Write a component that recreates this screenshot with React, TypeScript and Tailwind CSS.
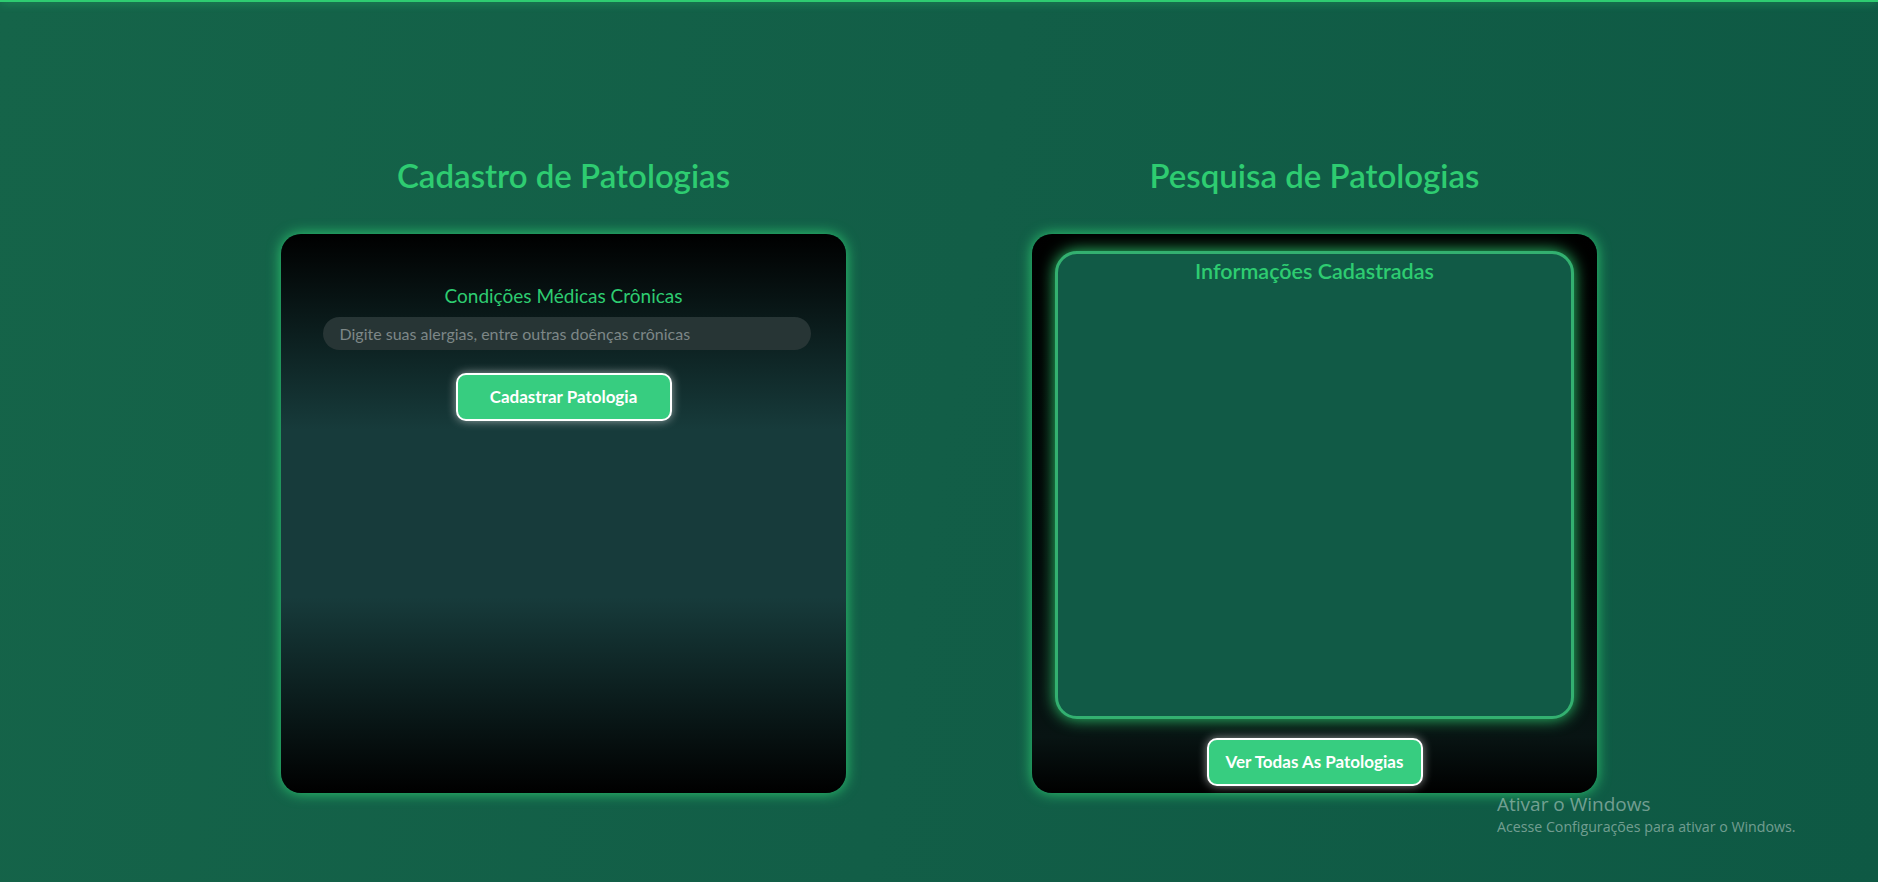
export default function App() {
  return (
    <div className="relative min-h-screen w-full overflow-hidden bg-[linear-gradient(100deg,#156449_0%,#125e47_50%,#0e5944_100%)] font-['Lato',sans-serif]">
      {/* barra superior */}
      <div className="absolute top-0 left-0 right-0 h-[2px] bg-[#2ecc71] shadow-[0_0_10px_#2ecc71]" />

      <div className="flex justify-center gap-[186px] pt-[156px]">
        {/* CADASTRO */}
        <div className="flex flex-col items-center">
          <h1 className="text-[33px] leading-[38px] font-semibold text-[#2ecc71] mb-[40px]">Cadastro de Patologias</h1>
          <div className="w-[565px] h-[559px] rounded-[20px] bg-[linear-gradient(180deg,#000_0%,#173b3b_35%,#173b3b_65%,#000_100%)] shadow-[0_0_14px_#2ecc71] flex flex-col items-center pt-[50px]">
            <label className="text-[19px] leading-[24px] text-[#2ecc71]">Condições Médicas Crônicas</label>
            <input
              type="text"
              placeholder="Digite suas alergias, entre outras doênças crônicas"
              className="mt-[9px] ml-[6px] w-[488px] h-[33px] rounded-full bg-[#273535] px-[17px] text-[16px] text-white placeholder:text-[#7d8787] outline-none"
            />
            <button className="mt-[23px] w-[216px] h-[48px] rounded-[10px] border-2 border-white bg-[#37cd80] text-white text-[17px] font-bold shadow-[0_0_10px_rgba(255,255,255,0.55)]">
              Cadastrar Patologia
            </button>
          </div>
        </div>

        {/* PESQUISA */}
        <div className="flex flex-col items-center">
          <h1 className="text-[33px] leading-[38px] font-semibold text-[#2ecc71] mb-[40px]">Pesquisa de Patologias</h1>
          <div className="w-[565px] h-[559px] rounded-[20px] bg-[linear-gradient(180deg,#000_0%,#030909_60%,#081413_90%,#000_100%)] shadow-[0_0_14px_#2ecc71] flex flex-col items-center pt-[17px] px-[23px]">
            <div className="w-full h-[468px] rounded-[22px] border-[3px] border-[#33b070] bg-[#115a46] shadow-[0_0_16px_#2ecc71] flex flex-col items-center pt-[3px]">
              <h2 className="text-[21.5px] leading-[28px] font-semibold text-[#2ecc71]">Informações Cadastradas</h2>
            </div>
            <button className="mt-[19px] w-[216px] h-[48px] rounded-[10px] border-2 border-white bg-[#37cd80] text-white text-[17px] font-bold shadow-[0_0_10px_rgba(255,255,255,0.55)]">
              Ver Todas As Patologias
            </button>
          </div>
        </div>
      </div>

      {/* marca d'água do Windows */}
      <div className="absolute left-[1497px] top-[791px] text-[rgba(255,255,255,0.42)] font-['Open_Sans',sans-serif]">
        <p className="text-[19px] leading-[26px]">Ativar o Windows</p>
        <p className="text-[14.2px] leading-[20px]">Acesse Configurações para ativar o Windows.</p>
      </div>
    </div>
  );
}
